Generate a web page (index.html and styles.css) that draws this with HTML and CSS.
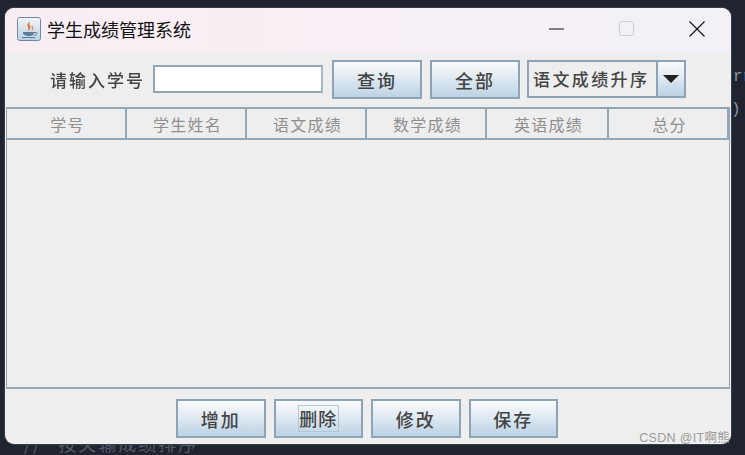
FILE: index.html
```html
<!doctype html>
<html>
<head>
	<meta charset="utf-8">
	<link rel="stylesheet" href="styles.css">
</head>
<body>
	<div class="behind behind-a">rr</div>
	<div class="behind behind-b">)</div>
	<div class="behind behind-c">// 按关输成绩排序</div>
	<div class="window">
		<div class="titlebar">
			<svg class="appicon" width="24" height="24" viewBox="0 0 24 24">
				<defs>
					<linearGradient id="ico" x1="0" y1="0" x2="0" y2="1">
						<stop offset="0" stop-color="#f3f6f9"/>
						<stop offset="1" stop-color="#b9cfe2"/>
					</linearGradient>
				</defs>
				<rect x="0.5" y="0.5" width="23" height="23" rx="2" fill="url(#ico)" stroke="#6f8aa0"/>
				<path d="M13 4c-3 3-3 4-2 6s0 3-1 4c3-1 4-3 3-5s-1-3 0-5z" fill="#e2702a"/>
				<path d="M16 8c-2 1-2 2-1 3s0 2-1 3c2-1 3-2 2-3.500s-1-1.500 0-2.500z" fill="#e2702a"/>
				<path d="M6 15h11v1c0 2-2 3-5 3s-6-1-6-3z" fill="#5d7d98"/>
				<path d="M17 15.500h2c1.500 0 1.500 2.500-2 3" fill="none" stroke="#5d7d98"/>
				<path d="M5 20.500h13" stroke="#5d7d98"/>
			</svg>
			<span class="title">学生成绩管理系统</span>
			<div class="winbtns">
				<svg class="winbtn" width="16" height="16" viewBox="0 0 16 16"><path d="M0 8h15" stroke="#111" stroke-width="1"/></svg>
				<svg class="winbtn" width="16" height="16" viewBox="0 0 16 16"><rect x="0.500" y="0.500" width="14" height="14" rx="2" fill="none" stroke="#cfcdd2"/></svg>
				<svg class="winbtn" width="16" height="16" viewBox="0 0 16 16"><path d="M0.500 0.500l15 15M15.500 0.500l-15 15" stroke="#111" stroke-width="1.100"/></svg>
			</div>
		</div>
		<div class="toolbar">
			<span class="label">请输入学号</span>
			<div class="field"></div>
			<div class="btn">查询</div>
			<div class="btn">全部</div>
			<div class="combo">
				<span class="combo-text">语文成绩升序</span>
				<span class="combo-arrow"><i></i></span>
			</div>
		</div>
		<div class="table">
			<div class="thead">
				<div class="th">学号</div>
				<div class="th">学生姓名</div>
				<div class="th">语文成绩</div>
				<div class="th">数学成绩</div>
				<div class="th">英语成绩</div>
				<div class="th">总分</div>
			</div>
		</div>
		<div class="actions">
			<div class="btn">增加</div>
			<div class="btn"><span class="focus">删除</span></div>
			<div class="btn">修改</div>
			<div class="btn">保存</div>
		</div>
	</div>
	<div class="mark">CSDN @IT啊熊</div>
</body>
</html>
```
FILE: styles.css
```css
html, body {
	margin: 0;
	height: 100%;
	overflow: hidden;
}
body {
	background: #1f2430;
	font-family: "Noto Sans CJK SC", "Liberation Sans", sans-serif;
	position: relative;
}
.behind {
	position: absolute;
	color: #8d939e;
	font-family: "Liberation Mono", monospace;
	font-size: 16px;
}
.behind-a {
	left: 733px;
	top: 68px;
}
.behind-b {
	left: 731px;
	top: 101px;
}
.behind-c {
	left: 24px;
	top: 433px;
	font-family: "Noto Sans CJK SC", sans-serif;
	font-size: 18px;
	line-height: 20px;
	color: #555b68;
	letter-spacing: 2px;
	word-spacing: 10px;
}
.window {
	position: absolute;
	left: 5px;
	top: 8px;
	width: 726px;
	height: 436px;
	box-sizing: border-box;
	background: #eeeeee;
	border-radius: 9px;
	box-shadow: 0 0 0 1px #3a3d45;
	overflow: hidden;
	display: flex;
	flex-direction: column;
}
.titlebar {
	height: 45px;
	flex: none;
	box-sizing: border-box;
	padding: 0 0 4px 12px;
	background: linear-gradient(90deg, #f8edf3 0%, #f7eff5 50%, #f3f0f8 100%);
	display: flex;
	align-items: center;
}
.appicon {
	flex: none;
}
.title {
	margin-left: 6px;
	font-size: 18px;
	line-height: 24px;
	color: #111;
}
.winbtns {
	margin-left: auto;
	margin-right: 26px;
	display: flex;
	gap: 54px;
}
.winbtn {
	display: block;
}
.toolbar {
	height: 54px;
	flex: none;
	box-sizing: border-box;
	display: flex;
	align-items: flex-start;
	padding: 7px 0 0 45px;
}
.label {
	width: 97px;
	margin-top: 8px;
	font-size: 17px;
	line-height: 24px;
	font-weight: 500;
	color: #444;
	letter-spacing: 2px;
	white-space: nowrap;
	filter: blur(0.4px);
}
.field {
	width: 170px;
	height: 28px;
	box-sizing: border-box;
	margin: 5px 0 0 6px;
	background: #fff;
	border: 2px solid #93a6b6;
	border-right-color: #a8b8c5;
}
.btn {
	width: 90px;
	height: 39px;
	box-sizing: border-box;
	border: 2px solid #8ea3b5;
	background: linear-gradient(180deg, #f9fbfc 0%, #e6eef4 35%, #bcd2e5 100%);
	display: flex;
	align-items: center;
	justify-content: center;
	font-size: 18px;
	font-weight: 500;
	color: #444;
	letter-spacing: 2px;
}
.toolbar .btn {
	margin-left: 8px;
}
.toolbar .field + .btn {
	margin-left: 9px;
}
.combo {
	width: 159px;
	height: 38px;
	box-sizing: border-box;
	margin-left: 7px;
	border: 2px solid #8ea3b5;
	display: flex;
	background: #eeeeee;
}
.combo-text {
	width: 129px;
	flex: none;
	box-sizing: border-box;
	border-right: 2px solid #8ea3b5;
	padding-left: 4px;
	font-size: 17px;
	line-height: 33px;
	font-weight: 500;
	color: #444;
	letter-spacing: 2.400px;
	white-space: nowrap;
	overflow: hidden;
}
.combo-arrow {
	flex: 1;
	display: flex;
	align-items: center;
	justify-content: center;
	background: linear-gradient(180deg, #f9fbfc 0%, #e6eef4 35%, #bcd2e5 100%);
}
.combo-arrow i {
	display: block;
	width: 0;
	height: 0;
	border-left: 8px solid transparent;
	border-right: 8px solid transparent;
	border-top: 8px solid #222;
}
.table {
	height: 282px;
	flex: none;
	margin-left: 1px;
	width: 724px;
	box-sizing: border-box;
	border: 1px solid #93a6b6;
	border-top-width: 2px;
	border-bottom-width: 2px;
}
.thead {
	height: 29px;
	box-sizing: content-box;
	display: grid;
	grid-template-columns: 120px 120px 120px 120px 122px 120px;
	border-bottom: 2px solid #93a6b6;
}
.th {
	border-right: 2px solid #93a6b6;
	padding-left: 3px;
	display: flex;
	align-items: center;
	justify-content: center;
	font-size: 16px;
	color: #8f8f8f;
	letter-spacing: 1.300px;
}
.actions {
	display: flex;
	gap: 8px;
	padding: 10px 0 0 171px;
}
.actions .btn {
	width: 89.500px;
}
.focus {
	width: 41px;
	height: 27px;
	box-sizing: border-box;
	border: 1px solid #b4c6d6;
	line-height: 24px;
	letter-spacing: 1px;
	text-align: center;
	white-space: nowrap;
	display: block;
}
.mark {
	position: absolute;
	right: 15px;
	top: 430px;
	font-family: "Liberation Sans", "Noto Sans CJK SC", sans-serif;
	font-size: 12.500px;
	line-height: 16px;
	color: #9a9a9a;
	letter-spacing: 0.300px;
}
```
